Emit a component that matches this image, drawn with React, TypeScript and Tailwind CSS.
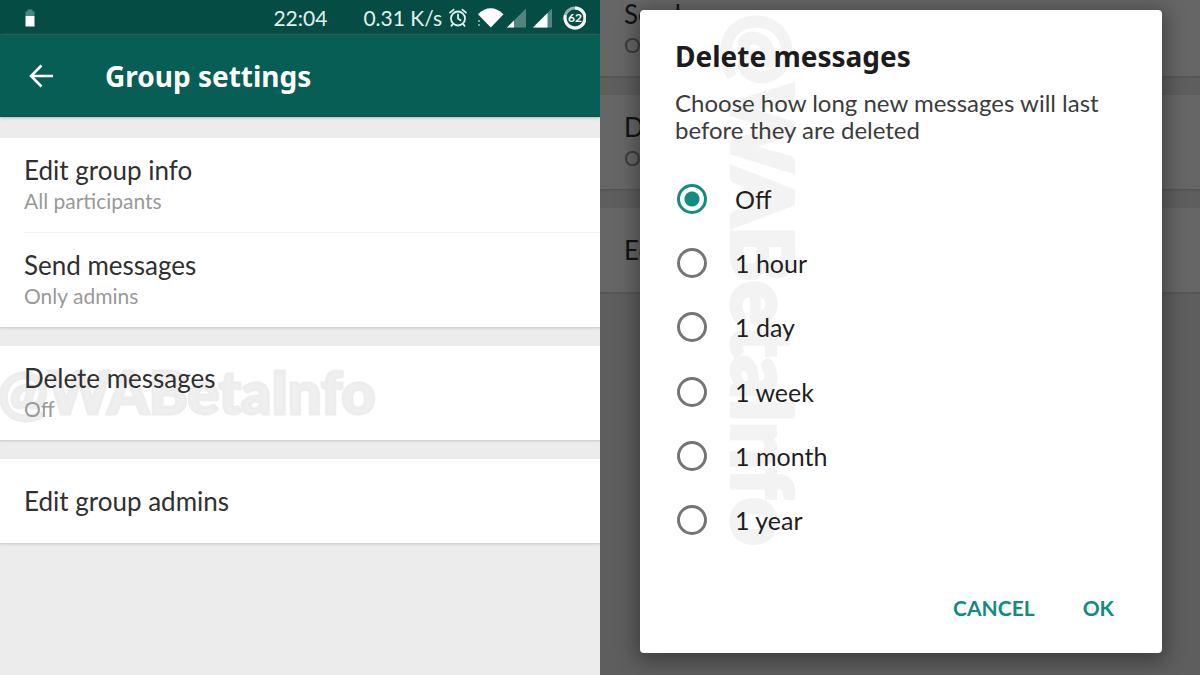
import React, { useState } from 'react';

type SettingRowProps = {
  title: string;
  value?: string;
};

const DURATIONS = ['Off', '1 hour', '1 day', '1 week', '1 month', '1 year'];

function StatusIcons() {
  return (
    <svg
      width="140"
      height="28"
      viewBox="0 0 140 28"
      fill="none"
      aria-hidden="true">
      {/* alarm */}
      <g stroke="#e3efed" strokeWidth="1.8" strokeLinecap="round">
        <circle cx="12" cy="14.5" r="7" />
        <path d="M12 10.5v4l2.6 1.8M4 8.6l3.6-3M20 8.6l-3.6-3M6.8 20.2l-1.4 1.6M17.2 20.2l1.4 1.6" />
      </g>
      {/* wifi */}
      <path d="M32 10.2Q44.5 -1.5 57.5 10.2L44.8 23.5z" fill="#fff" />
      <path d="M33 16v2M33 20v2" stroke="#7aa39e" strokeWidth="2" />
      {/* signal */}
      <path d="M61 23.5L80 4.5v19z" fill="#4f8780" />
      <path d="M61 23.5l7-7v7z" fill="#fff" />
      <path d="M87 23.5L106 4.5v19z" fill="#4f8780" />
      <path d="M87 23.5L101.5 9v14.5z" fill="#fff" />
      {/* battery */}
      <circle cx="129" cy="14" r="10" stroke="#8fb3ae" strokeWidth="3" />
      <path d="M129 4a10 10 0 1 1-9.6 7.2" stroke="#f2f7f6" strokeWidth="3" />
      <text
        x="129"
        y="18"
        textAnchor="middle"
        fontSize="12"
        fontWeight="700"
        fill="#fff">
        62
      </text>
    </svg>
  );
}

function StatusBar() {
  return (
    <div className="h-[35px] bg-[#054d44] flex items-center text-[#e3efed]">
      <svg
        className="ml-6"
        width="12"
        height="20"
        viewBox="0 0 12 20"
        aria-hidden="true">
        <path d="M1.5 3.5h2v-2h5v2h2V8h-9z" fill="#4f8780" />
        <path d="M1.5 8h9v10.5h-9z" fill="#fff" />
      </svg>
      <span className="ml-auto text-[21px] leading-7">22:04</span>
      <span className="ml-9 text-[21px] leading-7">0.31 K/s</span>
      <span className="ml-1 mr-[14px]">
        <StatusIcons />
      </span>
    </div>
  );
}

function Watermark({ className }: { className: string }) {
  return (
    <span
      aria-hidden="true"
      className={`absolute pointer-events-none select-none whitespace-nowrap font-black leading-none ${className}`}>
      @WABetaInfo
    </span>
  );
}

function SettingRow({ title, value }: SettingRowProps) {
  return (
    <button
      type="button"
      className={`relative block w-full pl-6 text-left ${value ? 'h-[94px]' : 'h-[84px]'}`}>
      <span className="block text-[26px] leading-8 text-[#303030]">{title}</span>
      {value && (
        <span className="block text-[21px] leading-[30px] text-[#999]">
          {value}
        </span>
      )}
    </button>
  );
}

function Section({ children }: { children: React.ReactNode }) {
  return (
    <section className="relative bg-white border-b border-[#d2d2d2] shadow-[0_1px_2px_#d8d8d8]">
      {children}
    </section>
  );
}

function SettingsScreen() {
  return (
    <main className="w-1/2 min-h-screen overflow-hidden bg-[#ececec]">
      <StatusBar />
      <header className="h-[82px] bg-[#075e54] flex items-center border-b border-[#06524a] shadow-[0_1px_3px_#bbb]">
        <button type="button" aria-label="Back" className="ml-7 text-white">
          <svg
            width="26"
            height="26"
            viewBox="0 0 26 26"
            fill="none"
            stroke="currentColor"
            strokeWidth="2.6">
            <path d="M25 13H3M13.5 2.5L3 13l10.5 10.5" />
          </svg>
        </button>
        <h1 className="ml-[51px] text-[28px] leading-9 font-bold font-['Noto_Sans',sans-serif] text-white">
          Group settings
        </h1>
      </header>
      <div className="pt-[21px] flex flex-col gap-[18px]">
        <Section>
          <SettingRow title="Edit group info" value="All participants" />
          <hr className="ml-6 border-[#f3f3f3]" />
          <SettingRow title="Send messages" value="Only admins" />
        </Section>
        <Section>
          <Watermark className="left-[-2px] top-4 text-[59px] text-[#efefef] [-webkit-text-stroke:3px_#ededed]" />
          <SettingRow title="Delete messages" value="Off" />
        </Section>
        <Section>
          <SettingRow title="Edit group admins" />
        </Section>
      </div>
    </main>
  );
}

function DeleteMessagesDialog() {
  const [duration, setDuration] = useState('Off');

  return (
    <div
      role="dialog"
      aria-labelledby="dialog-title"
      className="relative flex-1 flex flex-col rounded-sm bg-white pl-[35px] pr-9 pt-7 shadow-[0_4px_20px_4px_rgba(0,0,0,0.35)]">
      <Watermark className="left-[82px] top-1 [writing-mode:vertical-rl] text-[83px] text-[#f3f3f3] [-webkit-text-stroke:4px_#f3f3f3]" />
      <div className="relative flex-1 flex flex-col">
        <h2
          id="dialog-title"
          className="text-[28px] leading-9 font-bold font-['Noto_Sans',sans-serif] text-[#1c1c1c]">
          Delete messages
        </h2>
        <p className="mt-[15px] text-[24px] leading-[27px] text-[#3c3c3c]">
          Choose how long new messages will last before they are deleted
        </p>
        <fieldset className="mt-6 flex-1 flex flex-col">
          {DURATIONS.map((item) => (
            <label
              key={item}
              className="flex-1 flex items-center text-[25px] leading-8 text-[#1f1f1f]">
              <input
                type="radio"
                name="duration"
                value={item}
                checked={duration === item}
                onChange={() => setDuration(item)}
                className="appearance-none ml-[2px] mr-7 size-[30px] rounded-full border-3 border-[#757575] checked:border-[#128c7e] checked:bg-[radial-gradient(circle,#128c7e_7px,transparent_8px)]"
              />
              {item}
            </label>
          ))}
        </fieldset>
        <div className="mt-10 mb-[29px] flex justify-end gap-12 pr-3 text-[21px] leading-8 font-bold text-[#128c7e]">
          <button type="button">CANCEL</button>
          <button type="button">OK</button>
        </div>
      </div>
    </div>
  );
}

function DialogScreen() {
  return (
    <div className="relative w-1/2 min-h-screen overflow-hidden bg-[#ececec] flex">
      {/* settings list scrolled behind the dialog */}
      <div className="absolute inset-x-0 top-[-18px] flex flex-col gap-[18px]">
        <Section>
          <SettingRow title="Send messages" value="Only admins" />
        </Section>
        <Section>
          <SettingRow title="Delete messages" value="Off" />
        </Section>
        <Section>
          <SettingRow title="Edit group admins" />
        </Section>
      </div>
      <div className="relative flex-1 flex bg-black/60 pl-10 pr-[38px] pt-[10px] pb-[22px]">
        <DeleteMessagesDialog />
      </div>
    </div>
  );
}

export default function App() {
  return (
    <div className="flex min-h-screen font-['Lato',sans-serif]">
      <SettingsScreen />
      <DialogScreen />
    </div>
  );
}
